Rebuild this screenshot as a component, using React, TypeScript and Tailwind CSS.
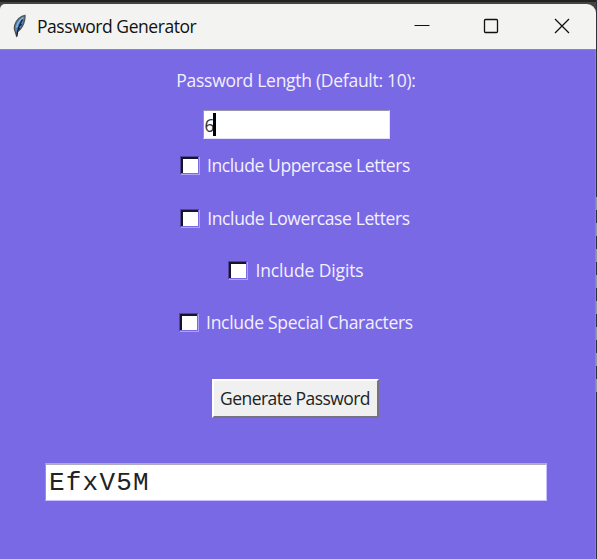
import React from "react";

const labelFont = "font-['Open_Sans','Noto_Sans',sans-serif] whitespace-nowrap";

function Feather() {
  return (
    <svg width="15" height="24" viewBox="0 0 15 24" className="block">
      <path d="M13 1.500C9 1.800 4 6 2.600 11.500c-.6 2.600-.3 4.800.7 6.500l1.100 3.500 1-3.800c3.800-2.700 6.200-6.700 7.100-11.200.4-2 .6-3.500.5-5Z" fill="#4a83bd" stroke="#555555" strokeWidth="1.300" />
      <path d="M11.300 3.500C8 5.500 5.500 9 4.500 13.500" stroke="#8fbbe6" strokeWidth="1.300" fill="none" />
      <path d="M10.500 5.500C8 9.500 5.600 14 4.900 22.500M9.800 10.500l-2.700 1.200M8 14.500l-2 .6" stroke="#15202c" strokeWidth="1.300" fill="none" />
    </svg>
  );
}

function Check({ text, row, spacing }: { text: string; row: string; spacing: string }) {
  return (
    <div className={`flex h-[24px] items-center ${row}`}>
      <span className="h-[19px] w-[20px] shrink-0 border border-t-[#51469b] border-l-[#51469b] border-r-[#ada2fa] border-b-[#ada2fa] bg-[#7969e4]">
        <span className="block h-[16px] w-[17px] border-t-2 border-l-2 border-[#171329] bg-white" />
      </span>
      <span className={`${labelFont} ml-[7px] text-[17.500px] leading-[24px] text-[#f3f0ff] ${spacing}`}>{text}</span>
    </div>
  );
}

export default function App() {
  return (
    <div className="flex h-[559px] w-[597px] overflow-hidden bg-[#303038]">
      <div className="flex h-full w-[596px] flex-col border-t-2 border-[#222222] bg-[#444444]">
        <header className="mt-[2px] flex h-[45px] shrink-0 items-center rounded-tl-[5px] rounded-tr-[9px] bg-[#f3f3f2] pb-[2px] pl-[12px]">
          <Feather />
          <h1 className={`${labelFont} ml-[10px] text-[17.500px] leading-[24px] text-[#111111] tracking-[-0.45px]`}>Password Generator</h1>
          <div className="ml-auto flex items-center pr-[26px]">
            <svg width="16" height="16" viewBox="0 0 16 16"><path d="M.5 7.500h15" stroke="#111" /></svg>
            <svg className="ml-[53px]" width="16" height="16" viewBox="0 0 16 16"><rect x="1.500" y="1.500" width="13" height="13" rx="1" fill="none" stroke="#111" strokeWidth="1.300" /></svg>
            <svg className="ml-[55px]" width="16" height="16" viewBox="0 0 16 16"><path d="M1 1l14 14M15 1L1 15" stroke="#111" strokeWidth="1.300" /></svg>
          </div>
        </header>
        <main className="flex grow flex-col items-center border-t border-r border-t-[#8c80df] border-r-[#8b80d5] bg-[#7969e4] pr-[3px]">
          <div className={`${labelFont} mt-[18px] text-[17.500px] leading-[24px] text-[#f3f0ff] tracking-[-0.28px]`}>Password Length (Default: 10):</div>
          <div className="mt-[18px] flex h-[29px] w-[187px] items-center border border-t-[#9993ae] border-l-[#9993ae] border-r-[#e6e0ff] border-b-[#e6e0ff] bg-white pl-[1px]">
            <span className={`${labelFont} w-[8px] text-[17.500px] leading-[24px] text-[#333333]`}>6</span>
            <span className="h-[23px] w-[3px] bg-black" />
          </div>
          <Check text="Include Uppercase Letters" row="mt-[14px] mr-[2px]" spacing="tracking-[-0.4px]" />
          <Check text="Include Lowercase Letters" row="mt-[29px] mr-[2px]" spacing="tracking-[-0.38px]" />
          <Check text="Include Digits" row="mt-[28px]" spacing="tracking-[-0.12px]" />
          <Check text="Include Special Characters" row="mt-[28px]" spacing="tracking-[-0.28px]" />
          <button className={`${labelFont} mt-[45px] mr-[2px] h-[39px] w-[167px] border-2 border-t-white border-l-white border-r-[#77737e] border-b-[#77737e] bg-[#f0f0f0] pb-[2px] text-[17.500px] leading-[24px] text-[#222222] tracking-[-0.57px]`}>Generate Password</button>
          <div className="mt-[45px] flex h-[38px] w-[502px] items-center border border-t-2 border-t-[#b0abbf] border-l-[#9d97ad] border-r-[#c9c0ff] border-b-[#c9c0ff] bg-white pl-[3px] font-['Courier_New','Liberation_Mono',monospace] text-[26px] leading-[32px] text-[#222222] tracking-[1.2px]">EfxV5M</div>
        </main>
      </div>
      <div className="flex w-px flex-col pt-[197px]">
        {Array.from({ length: 8 }, (_, i) => <span key={i} className="mb-[13px] h-[13px] w-px shrink-0 bg-[#96949e]" />)}
      </div>
    </div>
  );
}
